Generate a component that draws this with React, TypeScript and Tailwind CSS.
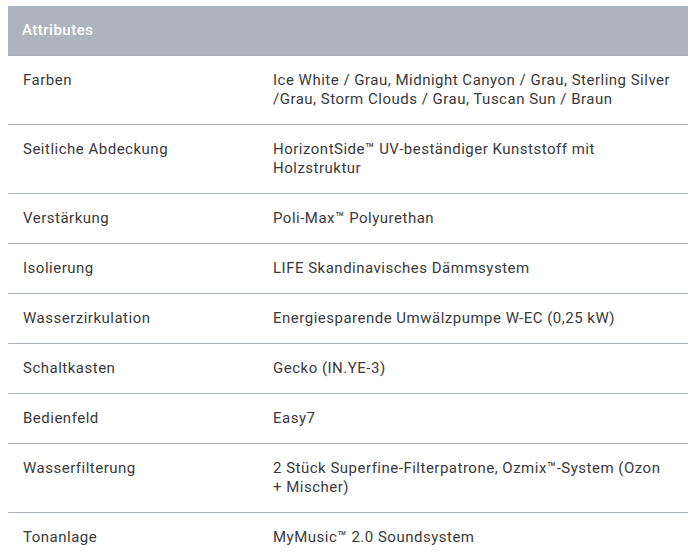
const rows: [string, string][] = [
  ["Farben", "Ice White / Grau, Midnight Canyon / Grau, Sterling Silver /Grau, Storm Clouds / Grau, Tuscan Sun / Braun"],
  ["Seitliche Abdeckung", "HorizontSide™ UV-beständiger Kunststoff mit Holzstruktur"],
  ["Verstärkung", "Poli-Max™ Polyurethan"],
  ["Isolierung", "LIFE Skandinavisches Dämmsystem"],
  ["Wasserzirkulation", "Energiesparende Umwälzpumpe W-EC (0,25 kW)"],
  ["Schaltkasten", "Gecko (IN.YE-3)"],
  ["Bedienfeld", "Easy7"],
  ["Wasserfilterung", "2 Stück Superfine-Filterpatrone, Ozmix™-System (Ozon + Mischer)"],
  ["Tonanlage", "MyMusic™ 2.0 Soundsystem"],
]

export default function App() {
  return (
    <div className="min-h-screen bg-white pt-[6px] px-2 text-[15px] leading-[19px] tracking-[0.5px] text-[#3a3a3a] [font-family:Roboto,'Noto_Sans',sans-serif]">
      <div className="w-[680px]">
        <div className="flex h-[49px] items-center bg-[#aeb4bf] pl-[14px] font-medium text-white">
          Attributes
        </div>
        {rows.map(([label, value]) => (
          <div key={label} className="flex border-t border-[#aab0bb] py-[15px] first-of-type:border-[#aeb4bf]">
            <div className="w-[250px] shrink-0 pl-[15px]">{label}</div>
            <div className="flex-1 pl-[15px] pr-[15px]">{value}</div>
          </div>
        ))}
      </div>
    </div>
  )
}
